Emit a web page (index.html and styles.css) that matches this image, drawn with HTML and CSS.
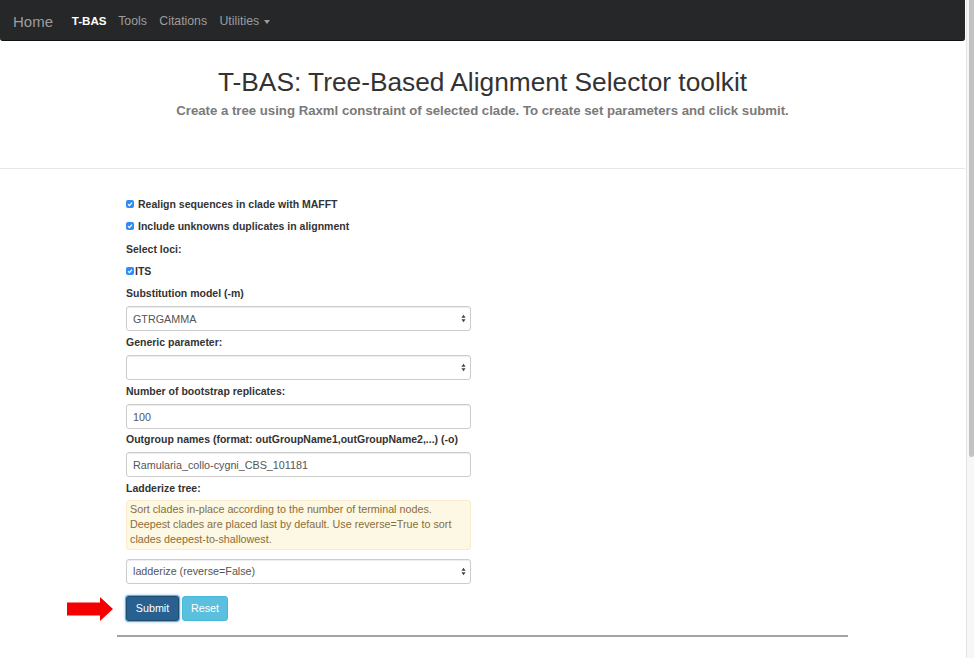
FILE: index.html
```html
<!DOCTYPE html>
<html>
<head>
<meta charset="utf-8">
<link rel="stylesheet" href="styles.css">
</head>
<body>
<div class="window">
  <div class="page">
    <nav class="navbar">
      <a class="brand">Home</a>
      <ul class="nav">
        <li class="active">T-BAS</li>
        <li>Tools</li>
        <li>Citations</li>
        <li>Utilities <span class="caret"></span></li>
      </ul>
    </nav>
    <header class="jumbo">
      <h1>T-BAS: Tree-Based Alignment Selector toolkit</h1>
      <p class="lead">Create a tree using Raxml constraint of selected clade. To create set parameters and click submit.</p>
    </header>
    <div class="container">
      <form class="form">
        <div class="check-row"><span class="cb"><svg viewBox="0 0 8 8"><path d="M2 4.2 L3.4 5.6 L6 2.6" /></svg></span><span class="lbl">Realign sequences in clade with MAFFT</span></div>
        <div class="check-row"><span class="cb"><svg viewBox="0 0 8 8"><path d="M2 4.2 L3.4 5.6 L6 2.6" /></svg></span><span class="lbl">Include unknowns duplicates in alignment</span></div>
        <div class="check-row"><span class="lbl">Select loci:</span></div>
        <div class="check-row tight"><span class="cb"><svg viewBox="0 0 8 8"><path d="M2 4.2 L3.4 5.6 L6 2.6" /></svg></span><span class="lbl">ITS</span></div>

        <div class="group">
          <div class="label">Substitution model (-m)</div>
          <div class="control select">GTRGAMMA<span class="arrows"><svg viewBox="0 0 6 10"><path d="M3 0.5 L5.5 4 H0.5 Z M3 9.5 L5.5 6 H0.5 Z"/></svg></span></div>
        </div>
        <div class="group">
          <div class="label">Generic parameter:</div>
          <div class="control select"><span class="arrows"><svg viewBox="0 0 6 10"><path d="M3 0.5 L5.5 4 H0.5 Z M3 9.5 L5.5 6 H0.5 Z"/></svg></span></div>
        </div>
        <div class="group short">
          <div class="label">Number of bootstrap replicates:</div>
          <div class="control">100</div>
        </div>
        <div class="group">
          <div class="label">Outgroup names (format: outGroupName1,outGroupName2,...) (-o)</div>
          <div class="control">Ramularia_collo-cygni_CBS_101181</div>
        </div>
        <div class="group">
          <div class="label">Ladderize tree:</div>
          <div class="alert">Sort clades in-place according to the number of terminal nodes. Deepest clades are placed last by default. Use reverse=True to sort clades deepest-to-shallowest.</div>
          <div class="control select">ladderize (reverse=False)<span class="arrows"><svg viewBox="0 0 6 10"><path d="M3 0.5 L5.5 4 H0.5 Z M3 9.5 L5.5 6 H0.5 Z"/></svg></span></div>
        </div>
        <div class="buttons">
          <span class="arrow"><svg viewBox="0 0 46 24"><path d="M0 5.5 H33 V0 L46 12 L33 24 V18.5 H0 Z"/></svg></span>
          <span class="btn primary">Submit</span>
          <span class="btn info">Reset</span>
        </div>
      </form>
      <hr class="bottom-rule">
    </div>
  </div>
  <div class="scrollbar"><div class="thumb"></div></div>
</div>
</body>
</html>
```
FILE: styles.css
```css
html, body {
  margin: 0;
  padding: 0;
  height: 100%;
  overflow: hidden;
  background: #fff;
}
body {
  font-family: "Liberation Sans", Arial, sans-serif;
  color: #333;
}
.window {
  display: flex;
  height: 658px;
}
.page {
  width: 965px;
  flex: none;
}
.navbar {
  height: 41px;
  background: #262728;
  border-bottom: 1px solid #111;
  border-radius: 0 0 3px 3px;
  box-sizing: border-box;
  display: flex;
  align-items: center;
  padding-top: 2px;
}
.brand {
  font-size: 15px;
  color: #9d9d9d;
  margin-left: 13px;
  margin-right: 12.5px;
  padding-top: 1px;
}
.nav {
  list-style: none;
  margin: 0;
  padding: 0;
  display: flex;
}
.nav li {
  font-size: 12.3px;
  color: #9d9d9d;
  padding: 0 6.2px;
}
.nav li.active {
  color: #fff;
  font-weight: 600;
  font-size: 11.6px;
  padding-right: 5.5px;
}
.caret {
  display: inline-block;
  width: 0;
  height: 0;
  border-top: 4px solid #9d9d9d;
  border-left: 3.5px solid transparent;
  border-right: 3.5px solid transparent;
  vertical-align: middle;
  margin-left: 1px;
}
.jumbo {
  text-align: center;
  padding-top: 26px;
  height: 101px;
  border-bottom: 1px solid #e6e6e6;
}
.jumbo h1 {
  margin: 0;
  font-size: 26.3px;
  font-weight: normal;
  line-height: 30px;
  color: #333;
}
.lead {
  margin: 4px 0 0;
  font-size: 13.2px;
  line-height: 20px;
  font-weight: bold;
  color: #7a7a7a;
}
.container {
  width: 731px;
  margin: 0 auto;
}
.form {
  width: 345px;
  margin-left: 9px;
  padding-top: 27px;
  font-size: 10.5px;
}
.check-row {
  display: flex;
  align-items: center;
  height: 15px;
  margin-bottom: 7.5px;
  font-weight: bold;
}
.cb {
  width: 8px;
  height: 8px;
  border-radius: 2px;
  background: #2f8cf3;
  margin-right: 4px;
  display: flex;
}
.tight .cb {
  margin-right: 1px;
}
.cb svg {
  width: 8px;
  height: 8px;
}
.cb path {
  fill: none;
  stroke: #fff;
  stroke-width: 1.2;
}
.group {
  margin-bottom: 4px;
}
.group.short {
  margin-bottom: 3px;
}
.label {
  font-weight: bold;
  line-height: 15px;
  margin-bottom: 5px;
}
.control {
  height: 25px;
  box-sizing: border-box;
  border: 1px solid #ccc;
  border-radius: 3px;
  box-shadow: inset 0 1px 1px rgba(0,0,0,0.075);
  padding: 0 6px;
  display: flex;
  align-items: center;
  color: #555;
  font-size: 10.75px;
  position: relative;
}
.select {
  background: #fff;
}
.arrows {
  position: absolute;
  right: 4px;
  top: 7px;
  width: 5px;
  height: 9px;
}
.arrows svg {
  width: 5px;
  height: 9px;
  display: block;
}
.arrows path {
  fill: #444;
}
.alert {
  background: #fcf8e3;
  border: 1px solid #faebcc;
  border-radius: 3px;
  color: #8a6d3b;
  font-size: 10.75px;
  line-height: 15px;
  padding: 1.5px 3px;
  margin-top: -1.5px;
  margin-bottom: 9px;
}
.buttons {
  display: flex;
  align-items: center;
  margin-top: 12px;
  position: relative;
}
.arrow {
  position: absolute;
  left: -59px;
  top: 1px;
  width: 46px;
  height: 24px;
}
.arrow svg {
  width: 46px;
  height: 24px;
  display: block;
}
.arrow path {
  fill: #f50000;
}
.btn {
  height: 25px;
  box-sizing: border-box;
  display: inline-flex;
  align-items: center;
  justify-content: center;
  color: #fff;
  border-radius: 3px;
  font-size: 10.75px;
}
.primary {
  width: 53px;
  background: #286090;
  border: 1px solid #204d74;
  box-shadow: 0 0 0 1px #69a8ee, 0 0 3px 1px rgba(102,175,233,0.6);
}
.info {
  width: 46px;
  margin-left: 3px;
  background: #5bc0de;
  border: 1px solid #46b8da;
}
.bottom-rule {
  margin: 14px 0 0;
  border: 0;
  border-top: 2px solid #a3a3a3;
}
.scrollbar {
  width: 8px;
  margin-left: 1px;
  background: #f7f7f7;
  border-left: 1px solid #e3e3e3;
  box-sizing: border-box;
  padding-left: 2px;
}
.thumb {
  width: 5px;
  height: 457px;
  background: #c2c2c2;
  border-radius: 0 0 3px 3px;
}
```
